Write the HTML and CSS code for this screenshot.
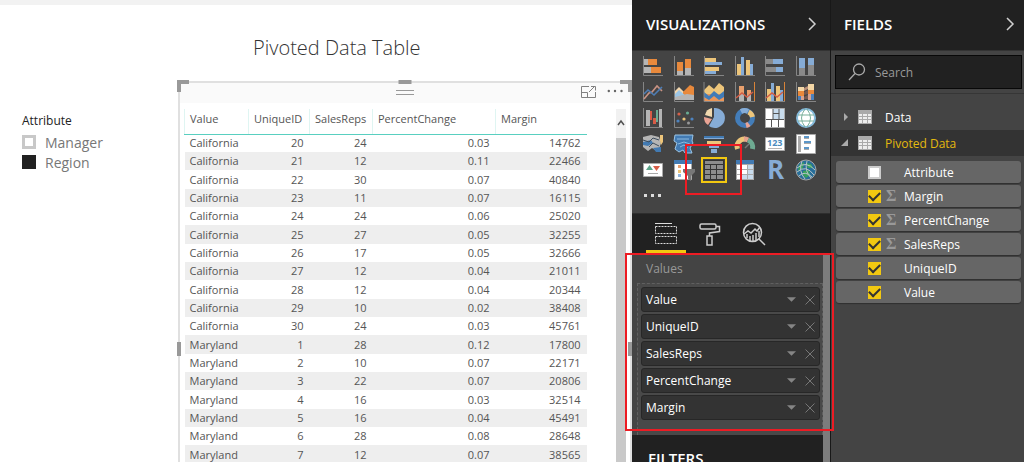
FILE: index.html
```html
<!DOCTYPE html>
<html lang="en">
<head>
<meta charset="utf-8">
<meta name="viewport" content="width=device-width, initial-scale=1">
<title>Pivoted Data Table</title>
<link rel="stylesheet" href="styles.css">
</head>
<body>
<div class="app">
  <main class="canvas">
    <h1 class="title">Pivoted Data Table</h1>
    <fieldset class="slicer">
      <legend>Attribute</legend>
      <label><input type="checkbox">Manager</label>
      <label><input type="checkbox" checked>Region</label>
    </fieldset>
    <section class="visual" aria-label="Table visual">
      <span class="handle corner-left"></span><span class="handle top"></span><span class="handle corner-right"></span>
      <span class="handle left"></span><span class="handle right"></span>
      <div class="visual-bar">
        <span class="grip"></span>
        <div class="visual-actions">
          <button type="button" aria-label="Focus mode"><svg width="17" height="14" viewBox="0 0 17 14" fill="none" stroke="#808080"><path d="M9 1.500H1.500V12.500H15.500V7M1.500 7.500H7.500V12.500M9 7L15 1M11 1.500H15.500V5.500"/></svg></button>
          <button type="button" aria-label="More options"><svg width="17" height="14" viewBox="0 0 17 14" fill="#666"><circle cx="1.800" cy="6" r="1.200"/><circle cx="8" cy="6" r="1.200"/><circle cx="14.500" cy="6" r="1.200"/></svg></button>
        </div>
      </div>
      <div class="visual-body">
        <table class="data">
          <colgroup><col class="c-value"><col class="c-id"><col class="c-reps"><col class="c-change"><col class="c-margin"></colgroup>
          <thead><tr><th>Value</th><th>UniqueID</th><th>SalesReps</th><th>PercentChange</th><th>Margin</th></tr></thead>
          <tbody>
            <tr><td>California</td><td>20</td><td>24</td><td>0.03</td><td>14762</td></tr>
            <tr><td>California</td><td>21</td><td>12</td><td>0.11</td><td>22466</td></tr>
            <tr><td>California</td><td>22</td><td>30</td><td>0.07</td><td>40840</td></tr>
            <tr><td>California</td><td>23</td><td>11</td><td>0.07</td><td>16115</td></tr>
            <tr><td>California</td><td>24</td><td>24</td><td>0.06</td><td>25020</td></tr>
            <tr><td>California</td><td>25</td><td>27</td><td>0.05</td><td>32255</td></tr>
            <tr><td>California</td><td>26</td><td>17</td><td>0.05</td><td>32666</td></tr>
            <tr><td>California</td><td>27</td><td>12</td><td>0.04</td><td>21011</td></tr>
            <tr><td>California</td><td>28</td><td>12</td><td>0.04</td><td>20344</td></tr>
            <tr><td>California</td><td>29</td><td>10</td><td>0.02</td><td>38408</td></tr>
            <tr><td>California</td><td>30</td><td>24</td><td>0.03</td><td>45761</td></tr>
            <tr><td>Maryland</td><td>1</td><td>28</td><td>0.12</td><td>17800</td></tr>
            <tr><td>Maryland</td><td>2</td><td>10</td><td>0.07</td><td>22171</td></tr>
            <tr><td>Maryland</td><td>3</td><td>22</td><td>0.07</td><td>20806</td></tr>
            <tr><td>Maryland</td><td>4</td><td>16</td><td>0.03</td><td>32514</td></tr>
            <tr><td>Maryland</td><td>5</td><td>16</td><td>0.04</td><td>45491</td></tr>
            <tr><td>Maryland</td><td>6</td><td>28</td><td>0.08</td><td>28648</td></tr>
            <tr><td>Maryland</td><td>7</td><td>12</td><td>0.07</td><td>38565</td></tr>
          </tbody>
        </table>
        <div class="table-scroll" aria-hidden="true">
          <svg width="10" height="29" viewBox="0 0 10 29" fill="none" stroke="#505050" stroke-width="1.500"><path d="M2 16L5 12L8 16"/></svg>
          <span></span>
        </div>
      </div>
    </section>
  </main>

  <aside class="viz">
    <header class="pane-head"><h2>VISUALIZATIONS</h2><button type="button" aria-label="Collapse visualizations"><svg width="10" height="16" viewBox="0 0 10 16" fill="none" stroke="#d0d0d0" stroke-width="1.500"><path d="M2 2L8 8L2 14"/></svg></button></header>
    <div class="gallery">
      <div class="icons">
        <button type="button" aria-label="Stacked bar chart"><svg viewBox="0 0 20 20"><path class="ax" d="M.5 0V19.500H20"/><path fill="#b5b5b5" d="M1 3h4v6H1zM1 11h7v6H1z"/><path fill="#e8893c" d="M5 3h9v6H5zM8 11h10v6H8z"/></svg></button>
        <button type="button" aria-label="Stacked column chart"><svg viewBox="0 0 20 20"><path class="ax" d="M.5 0V19.500H20"/><path fill="#b5b5b5" d="M3 15h6v4H3zM11 12h6v7h-6z"/><path fill="#e8893c" d="M3 6h6v9H3zM11 3h6v9h-6z"/></svg></button>
        <button type="button" aria-label="Clustered bar chart"><svg viewBox="0 0 20 20"><path class="ax" d="M.5 0V19.500H20"/><path fill="#edc57a" d="M1 2h11v4H1zM1 11h14v4H1z"/><path fill="#86acd6" d="M1 6h17v3H1zM1 15h11v3H1z"/></svg></button>
        <button type="button" aria-label="Clustered column chart"><svg viewBox="0 0 20 20"><path class="ax" d="M.5 0V19.500H20"/><path fill="#edc57a" d="M2 8h4v11H2zM11 4h4v15h-4z"/><path fill="#86acd6" d="M6 1h3v18H6zM15 8h3v11h-3z"/></svg></button>
        <button type="button" aria-label="100% stacked bar chart"><svg viewBox="0 0 20 20"><path class="ax" d="M.5 0V19.500H20"/><path fill="#8a8a8a" d="M1 3h7v5H1zM1 11h10v5H1z"/><path fill="#86acd6" d="M8 3h10v5H8zM11 11h7v5h-7z"/></svg></button>
        <button type="button" aria-label="100% stacked column chart"><svg viewBox="0 0 20 20"><path class="ax" d="M.5 0V19.500H20"/><path fill="#8a8a8a" d="M3 12h6v7H3zM12 9h6v10h-6z"/><path fill="#86acd6" d="M3 2h6v10H3zM12 2h6v7h-6z"/></svg></button>

        <button type="button" aria-label="Line chart"><svg viewBox="0 0 20 20"><path class="ax" d="M.5 0V19.500H20"/><g fill="none" stroke-width="1.600"><path stroke="#c99384" d="M1 17L6 11L9 10L14 4L19 9"/><path stroke="#4e7db4" d="M1 12L5 8L11 13L19 5"/></g></svg></button>
        <button type="button" aria-label="Area chart"><svg viewBox="0 0 20 20"><path class="ax" d="M.5 0V19.500H20"/><path fill="#f3d7ae" d="M1 9L5 5L12 12V18H1z"/><path fill="#e8893c" d="M9 10L16 3L20 5V18H9z"/><path fill="#9cc5e5" d="M1 12L5 8L13 15V18H1z"/><path fill="#b5b5b5" d="M1 15L13 12L20 13V18H1z"/></svg></button>
        <button type="button" aria-label="Stacked area chart"><svg viewBox="0 0 20 20"><path fill="#edc57a" d="M0 8L5 3L10 7L15 1L20 5V16H0z"/><path fill="#ec9658" d="M0 12H20V19H0z"/><path fill="#417bb7" d="M0 10L5 14L10 9L15 13L20 9V15L15 18L10 14L5 18L0 15z"/><path class="ax" d="M0 0V19.500H20"/></svg></button>
        <button type="button" aria-label="Line and stacked column chart"><svg viewBox="0 0 20 20"><path class="ax" d="M.5 0V19.500H20"/><path fill="#b5b5b5" d="M4 11h5v8H4zM12 12h4v7h-4z"/><path fill="#e9a06d" d="M4 4h5v8H4zM12 8h4v5h-4z"/><path fill="none" stroke="#d35d45" stroke-width="1.500" d="M1 16L7 11L12 15L18 10"/><path fill="#d88338" d="M19 0h1v19h-1z"/></svg></button>
        <button type="button" aria-label="Line and clustered column chart"><svg viewBox="0 0 20 20"><path class="ax" d="M.5 0V19.500H20"/><path fill="#edc57a" d="M2 7h4v12H2zM11 4h4v15h-4z"/><path fill="#86acd6" d="M6 1h3v18H6zM15 8h3v11h-3z"/><path fill="none" stroke="#d35d45" stroke-width="1.500" d="M1 16L7 11L12 15L18 10"/><path fill="#d88338" d="M19 0h1v19h-1z"/></svg></button>
        <button type="button" aria-label="Ribbon chart"><svg viewBox="0 0 20 20"><path class="ax" d="M.5 0V19.500H20"/><path fill="#b98f78" d="M8 6L12 4V7L8 9z"/><path fill="#74584f" d="M8 10L12 8V12L8 13zM8 15L12 13V17H8z"/><path fill="#f4d7a6" d="M2 5h6v4H2zM12 2h6v6h-6z"/><path fill="#e8893c" d="M2 9h6v5H2zM12 8h6v4h-6z"/><path fill="#4c80bb" d="M2 14h3v4H2zM15 12h3v6h-3z"/><path fill="#d8a28e" d="M5 14h3v4H5zM12 12h3v6h-3z"/></svg></button>

        <button type="button" aria-label="Waterfall chart"><svg viewBox="0 0 20 20"><path class="ax" d="M.5 0V19.500H20"/><path fill="#b5b5b5" d="M3 2h4v16H3zM16 1h3v18h-3z"/><path fill="#d75b45" d="M7 3h2v9H7zM10 10h3v6h-3z"/><path fill="#69ab91" d="M13 2h2v12h-2z"/></svg></button>
        <button type="button" aria-label="Scatter chart"><svg viewBox="0 0 20 20"><path class="ax" d="M.5 0V19.500H20"/><circle cx="5" cy="6" r="1.600" fill="#d65f48"/><circle cx="13.500" cy="5" r="1.600" fill="#69ab91"/><circle cx="4" cy="13" r="1.600" fill="#4d83bf"/><circle cx="10" cy="11" r="1.600" fill="#edc57a"/><circle cx="18" cy="11" r="1.600" fill="#4d83bf"/><circle cx="14.500" cy="15" r="1.500" fill="#999"/></svg></button>
        <button type="button" aria-label="Pie chart"><svg viewBox="0 0 20 20"><path fill="#86acd6" d="M10 0A10 10 0 1 1 5 18L10 9z"/><path fill="#f1d9af" d="M8 0A9 9 0 0 0 1 7L8 9z"/><path fill="#e9a394" d="M0 9L8 11L4 17A9 9 0 0 1 0 9z"/></svg></button>
        <button type="button" aria-label="Donut chart"><svg viewBox="0 0 20 20" fill="none" stroke-width="5"><circle cx="10" cy="10" r="7.500" stroke="#437db9"/><path stroke="#86acd6" d="M6 3.500A7.500 7.500 0 0 1 13 3.500"/><path stroke="#edc57a" d="M13.500 4A7.500 7.500 0 0 1 17.500 9"/><path stroke="#e9a394" d="M14 16A7.500 7.500 0 0 1 11 17.500"/></svg></button>
        <button type="button" aria-label="Treemap"><svg viewBox="0 0 20 20"><path fill="#fff" stroke="#aaa" d="M.5.500h19v19H.5z"/><path fill="#c8dced" d="M8 1h11v10H8z"/><path stroke="#555" fill="none" d="M1 11.500H19M8 1V11M8 5.500H14V1M14 5V11M6.500 12V19M13.500 12V19"/></svg></button>
        <button type="button" aria-label="Map"><svg viewBox="0 0 20 20"><circle cx="10" cy="10" r="9" fill="#fff" stroke="#86bbdc" stroke-width="2"/><path fill="none" stroke="#79af9a" d="M2 7H18M2 13H18M9 1Q2 10 9 19M11 1Q18 10 11 19"/></svg></button>

        <button type="button" aria-label="Filled map"><svg viewBox="0 0 20 20"><path fill="#b5b5b5" d="M0 3L8 1L16 3L18 9L15 18L9 14L5 17L0 13z"/><path fill="#427ab2" d="M0 8L8 6L10 9L5 12L0 11zM10 14L18 13L18 18H13z"/><path stroke="#3d4d5d" fill="none" d="M0 6L6 8L10 4L16 6M6 13L10 9L16 12"/><path fill="#edc57a" d="M17 1h3v7l-2 3-1-4z"/></svg></button>
        <button type="button" aria-label="Shape map"><svg viewBox="0 0 20 20"><path fill="#427ab2" stroke="#9cc5e5" d="M1 1L9 1L19 1L18 7L19 9L16 14L18 19L11 19L9 16L5 18L1 15L3 9L0 7z"/><path stroke="#8cb9df" fill="none" d="M3 5H15M4 10L10 8L16 10M6 13L10 11L14 14"/></svg></button>
        <button type="button" aria-label="Funnel"><svg viewBox="0 0 20 20"><path fill="#427ab2" d="M0 2h20v2H0z"/><path fill="#86acd6" d="M0 4h20v1H0zM5 11h10v3H5zM7 15h6v4H7z"/><path fill="#edc57a" d="M3 7h14v3H3z"/></svg></button>
        <button type="button" aria-label="Gauge"><svg viewBox="0 0 20 20" fill="none" stroke-width="5"><path stroke="#edc57a" d="M2.500 15A7.500 7.500 0 0 1 10 5"/><path stroke="#e5a18e" d="M9 5A8 8 0 0 1 13 6"/><path stroke="#6eaa92" d="M13 6A8 8 0 0 1 17.500 15"/><path stroke="#777" stroke-width="1.500" d="M10 14L14 10"/></svg></button>
        <button type="button" aria-label="Card"><svg viewBox="0 0 20 20"><path fill="#fff" stroke="#aaa" d="M.5 3.500h19v13H.5z"/><text x="2" y="12" font-size="9" font-weight="700" fill="#4b8bbd">123</text><path fill="#b5b5b5" d="M3 14h14v1H3z"/></svg></button>
        <button type="button" aria-label="Multi-row card"><svg viewBox="0 0 20 20"><path fill="#fff" stroke="#aaa" d="M.5.500h19v19H.5z"/><path fill="#aaa" d="M2 2h3v16H2zM8 4h5v1H8zM8 9h7v1H8zM8 15h5v1H8z"/><path fill="#5c97c9" d="M8 2h5v2H8zM8 7h7v2H8zM8 13h5v2H8z"/></svg></button>

        <button type="button" aria-label="KPI"><svg viewBox="0 0 20 20"><path fill="#fff" stroke="#aaa" d="M.5 3.500h19v13H.5z"/><path fill="#5ca58a" d="M3 10L6.500 5L10 10z"/><path fill="#d65f48" d="M10 6h7l-3.500 5z"/><path fill="#aaa" d="M5 13h10v1H5z"/></svg></button>
        <button type="button" aria-label="Slicer"><svg viewBox="0 0 20 20"><path fill="#fff" stroke="#aaa" d="M.5.500h17v19H.5z"/><path fill="#427ab2" d="M0 0h18v4H0z"/><path fill="#e9a06d" d="M4 5h3v3H4z"/><path fill="#edc57a" d="M4 10h3v3H4z"/><path fill="#8fb4dd" d="M4 14h3v3H4z"/><path fill="#777" d="M9 9h12v3l-4 4v5l-3-2v-3l-5-4z"/></svg></button>
        <button type="button" aria-label="Table" aria-pressed="true" class="selected"><svg viewBox="0 0 20 20"><path fill="#333" d="M0 0h20v20H0z"/><path fill="#8c8c8c" d="M1 1h18v3H1zM1 5h5v4H1zM7 5h5v4H7zM13 5h6v4h-6zM1 10h5v4H1zM7 10h5v4H7zM13 10h6v4h-6zM1 15h5v4H1zM7 15h5v4H7zM13 15h6v4h-6z"/></svg></button>
        <button type="button" aria-label="Matrix"><svg viewBox="0 0 20 20"><path fill="#aaa" d="M1 1h18v19H1z"/><path fill="#427ab2" d="M1 0h18v4H1z"/><path fill="#fff" d="M2 5h4v4H2zM2 10h4v4H2zM2 15h4v4H2zM7 5h5v4H7zM7 10h5v4H7z"/><path fill="#c8dced" d="M13 5h5v4h-5zM13 10h5v4h-5zM7 15h5v4H7zM13 15h5v4h-5z"/></svg></button>
        <button type="button" aria-label="R script visual"><svg viewBox="0 0 20 20"><text x="2" y="19" font-size="26" font-weight="700" fill="#86acd6">R</text></svg></button>
        <button type="button" aria-label="ArcGIS map"><svg viewBox="0 0 20 20"><circle cx="10" cy="10" r="10" fill="#276e99" stroke="#a5a5a5"/><path fill="#37a05b" d="M3 5L8 2L7 8L2 11zM10 3L15 4L17 8L12 8zM7 11L13 10L14 15L10 18L7 15z"/><path fill="none" stroke="#b8c4c9" d="M1 8Q10 0 19 10M1 12Q10 4 18 15M3 16Q9 10 16 17M6 1Q2 11 9 19M11 1Q8 11 15 18"/></svg></button>
      </div>
      <button type="button" class="more" aria-label="More visuals"><i></i><i></i><i></i></button>
      <span class="mark mark-icon"></span>
    </div>
    <nav class="tabs" aria-label="Visual settings">
      <button type="button" class="active" aria-label="Fields"><svg viewBox="0 0 24 24" fill="none" stroke="#ddd"><path d="M1 1.500H18"/><path stroke-dasharray="2 1" d="M1.500 4.500H22.500V11.500H1.500zM1.500 14.500H22.500V21.500H1.500z"/></svg></button>
      <button type="button" aria-label="Format"><svg viewBox="0 0 24 24" fill="none" stroke="#ccc" stroke-width="1.500"><rect x="2" y="2" width="16" height="5" rx="1.500"/><path d="M18 4.500H21.500V9.500L11.500 11V14M9 14H14V23H9z"/></svg></button>
      <button type="button" aria-label="Analytics"><svg viewBox="0 0 24 24" fill="none" stroke="#ccc" stroke-width="1.500"><circle cx="10.500" cy="10.500" r="9"/><path d="M17 17L23 23M2 12L6 9L9 11L13 7L15 9L18 5M5 12V16M8 14V19M11 13V19M14 11V18M17 9V15"/></svg></button>
    </nav>
    <div class="wells">
      <div class="wells-content">
        <h3>Values</h3>
        <ul class="chips">
          <li><span>Value</span><button type="button" aria-label="Value options"><svg class="down" viewBox="0 0 8 5"><path d="M0 0H8L4 4z"/></svg></button><button type="button" aria-label="Remove Value"><svg class="cross" viewBox="0 0 10 10"><path d="M.5.500L9.500 9.500M9.500.500L.5 9.500"/></svg></button></li>
          <li><span>UniqueID</span><button type="button" aria-label="UniqueID options"><svg class="down" viewBox="0 0 8 5"><path d="M0 0H8L4 4z"/></svg></button><button type="button" aria-label="Remove UniqueID"><svg class="cross" viewBox="0 0 10 10"><path d="M.5.500L9.500 9.500M9.500.500L.5 9.500"/></svg></button></li>
          <li><span>SalesReps</span><button type="button" aria-label="SalesReps options"><svg class="down" viewBox="0 0 8 5"><path d="M0 0H8L4 4z"/></svg></button><button type="button" aria-label="Remove SalesReps"><svg class="cross" viewBox="0 0 10 10"><path d="M.5.500L9.500 9.500M9.500.500L.5 9.500"/></svg></button></li>
          <li><span>PercentChange</span><button type="button" aria-label="PercentChange options"><svg class="down" viewBox="0 0 8 5"><path d="M0 0H8L4 4z"/></svg></button><button type="button" aria-label="Remove PercentChange"><svg class="cross" viewBox="0 0 10 10"><path d="M.5.500L9.500 9.500M9.500.500L.5 9.500"/></svg></button></li>
          <li><span>Margin</span><button type="button" aria-label="Margin options"><svg class="down" viewBox="0 0 8 5"><path d="M0 0H8L4 4z"/></svg></button><button type="button" aria-label="Remove Margin"><svg class="cross" viewBox="0 0 10 10"><path d="M.5.500L9.500 9.500M9.500.500L.5 9.500"/></svg></button></li>
        </ul>
        <h2 class="filters">FILTERS</h2>
      </div>
      <span class="mark mark-values"></span>
    </div>
  </aside>

  <aside class="fields">
    <header class="pane-head"><h2>FIELDS</h2><button type="button" aria-label="Collapse fields"><svg width="10" height="16" viewBox="0 0 10 16" fill="none" stroke="#d0d0d0" stroke-width="1.500"><path d="M2 2L8 8L2 14"/></svg></button></header>
    <div class="search-area">
      <label class="search"><svg width="18" height="18" viewBox="0 0 18 18" fill="none" stroke="#aaa" stroke-width="1.300"><circle cx="11" cy="6.500" r="5.500"/><path d="M7 10.500L1 17"/></svg><input type="search" placeholder="Search" aria-label="Search"></label>
    </div>
    <div class="tree">
      <button type="button" class="node" aria-expanded="false"><svg width="8" height="10" viewBox="0 0 8 10"><path fill="#aaa" d="M3 1L7 5L3 9z"/></svg><svg width="14" height="14" viewBox="0 0 14 14"><path fill="#aaa" d="M0 0h14v14H0z"/><path fill="#eee" d="M1 4h3v2H1zM5 4h4v2H5zM10 4h3v2h-3zM1 7h3v2H1zM5 7h4v2H5zM10 7h3v2h-3zM1 10h3v3H1zM5 10h4v3H5zM10 10h3v3h-3z"/></svg>Data</button>
      <button type="button" class="node open" aria-expanded="true"><svg width="8" height="10" viewBox="0 0 8 10"><path fill="#aaa" d="M7 1V8H0z"/></svg><svg width="14" height="14" viewBox="0 0 14 14"><path fill="#aaa" d="M0 0h14v14H0z"/><path fill="#eee" d="M1 4h3v2H1zM5 4h4v2H5zM10 4h3v2h-3zM1 7h3v2H1zM5 7h4v2H5zM10 7h3v2h-3zM1 10h3v3H1zM5 10h4v3H5zM10 10h3v3h-3z"/></svg>Pivoted Data</button>
      <div class="field-list">
        <label><input type="checkbox"><span class="sigma"></span>Attribute</label>
        <label><input type="checkbox" checked><span class="sigma">Σ</span>Margin</label>
        <label><input type="checkbox" checked><span class="sigma">Σ</span>PercentChange</label>
        <label><input type="checkbox" checked><span class="sigma">Σ</span>SalesReps</label>
        <label><input type="checkbox" checked><span class="sigma"></span>UniqueID</label>
        <label><input type="checkbox" checked><span class="sigma"></span>Value</label>
      </div>
    </div>
  </aside>
</div>
</body>
</html>
```
FILE: styles.css
```css
* { box-sizing: border-box; }
body { margin: 0; font-family: "Open Sans", "Noto Sans", sans-serif; font-size: 12px; background: #fff; }
h1, h2, h3, ul, fieldset { margin: 0; padding: 0; border: 0; font-weight: 400; }
button { padding: 0; border: 0; background: none; color: inherit; font: inherit; }
svg { display: block; }
.app { display: flex; height: 100vh; overflow: hidden; }

/* Report canvas */
.canvas { flex: 1; min-width: 0; display: grid; grid-template-columns: 178px 1fr; grid-template-rows: 76px 1fr; border-top: 5px solid #f2f2f2; color: #444; }
.title { grid-column: 1 / 3; padding: 28px 0 0 253px; font-size: 20px; font-weight: 300; line-height: 30px; white-space: nowrap; color: #333; }
.slicer { padding: 31px 0 0 22px; min-width: 0; }
.slicer legend { float: left; width: 100%; padding: 0; margin-bottom: 2px; line-height: 18px; color: #222; }
.slicer label { display: flex; clear: both; align-items: center; gap: 9px; height: 20px; font-size: 14px; color: #777; }
.slicer input { appearance: none; width: 14px; height: 14px; margin: 0; border: 3px solid #c8c8c8; background: #fff; }
.slicer input:checked { border-color: #212121; background: #212121; }

.visual { position: relative; min-width: 0; border: 2px solid #e0e0e0; border-bottom: 0; }
.handle { position: absolute; background: #999; }
.handle.top { top: -3px; left: 50%; width: 13px; height: 4px; transform: translateX(-50%); }
.handle.left { top: 259px; left: -3px; width: 4px; height: 14px; }
.handle.right { top: 259px; right: -2px; width: 4px; height: 14px; }
.handle.corner-left { top: -3px; left: -3px; width: 12px; height: 12px; border: solid #999; border-width: 4px 0 0 4px; background: none; }
.handle.corner-right { top: -3px; right: -2px; width: 12px; height: 12px; border: solid #999; border-width: 4px 4px 0 0; background: none; }
.visual-bar { display: grid; grid-template-columns: 1fr auto 1fr; height: 20px; background: #fafafa; }
.grip { grid-column: 2; width: 18px; height: 5px; margin-top: 7px; border: solid #999; border-width: 1px 0; }
.visual-actions { display: flex; align-items: flex-start; justify-content: flex-end; gap: 10px; padding: 2px 6px 0 0; }
.visual-body { display: flex; justify-content: space-between; padding: 6px 4px 0; }
.data { border-collapse: collapse; table-layout: fixed; width: 402px; font-size: 11px; color: #555; }
.c-value { width: 64px; } .c-id { width: 61px; } .c-reps { width: 63px; } .c-change { width: 123px; } .c-margin { width: 91px; }
.data th { height: 25px; padding: 0 0 5px 5px; border-left: 1px solid #dff5f2; border-bottom: 1px solid #59cfc0; text-align: left; font-weight: 400; white-space: nowrap; }
.data td { height: 18px; padding: 0 6px 0 5px; line-height: 16px; text-align: right; }
.data tr:nth-child(3n) td { height: 19px; }
.data td:first-child { text-align: left; }
.data tbody tr:nth-child(even) { background: #eee; }
.table-scroll { display: flex; flex-direction: column; width: 10px; background: #f1f1f1; }
.table-scroll span { flex: 1; background: #c9c9c9; }

/* Side panes */
.viz, .fields { display: flex; flex-direction: column; background: #444; color: #fff; }
.viz { position: relative; z-index: 1; width: 199px; border-right: 1px solid #181818; }
.fields { width: 193px; }
.pane-head { display: flex; align-items: center; justify-content: space-between; height: 51px; padding: 0 13px 2px 14px; background: #212121; border-bottom: 1px solid #333; }
.fields .pane-head { padding: 0 9px 2px 13px; }
h2 { font-size: 15px; font-weight: 600; line-height: 18px; }
.gallery { position: relative; height: 162px; padding: 5px 14px 0 11px; }
.icons { display: grid; grid-template-columns: repeat(6, 20px); justify-content: space-between; row-gap: 6px; }
.icons button, .icons svg { width: 20px; height: 20px; }
.icons svg { overflow: visible; }
.icons .ax { fill: none; stroke: #858585; }
.icons .selected { outline: 2px solid #f2c811; outline-offset: 1px; }
.more { display: flex; gap: 4px; padding: 14px 0 0 1px; }
.more i { width: 3px; height: 3px; background: #ddd; }
.mark { position: absolute; border: 2px solid #ed1c24; pointer-events: none; }
.mark-icon { left: 53px; top: 93px; width: 57px; height: 51px; }
.tabs { display: flex; gap: 4px; height: 40px; padding-left: 14px; background: #212121; border-top: 1px solid #2d2d2d; }
.tabs button { width: 40px; padding: 4px 8px 0; border-bottom: 3px solid transparent; }
.tabs .active { border-color: #f2c811; }
.tabs svg { width: 24px; height: 24px; }
.wells { position: relative; flex: 1; min-height: 0; border-right: 7px solid #7c7c7c; }
.mark-values { left: -7px; right: -11px; top: 0; height: 178px; }
.wells-content { height: 100%; overflow: hidden; }
h3 { padding: 8px 14px 6px; font-size: 12px; line-height: 16px; color: #999; }
.chips { display: flex; flex-direction: column; gap: 2px; margin: 0 0 0 5px; padding: 3px 2px 15px 3px; border: 1px dashed #606060; border-bottom: 0; background: #494949; list-style: none; }
.chips li { display: flex; align-items: center; height: 25px; padding: 0 4px; border: 1px solid #272727; border-radius: 3px; background: #333; }
.chips span { flex: 1; }
.chips button + button { margin-left: 9px; }
.down { width: 9px; height: 6px; fill: #858585; }
.cross { width: 10px; height: 10px; fill: none; stroke: #777; }
.filters { padding: 14px 16px; background: #212121; }

.search-area { padding: 4px 2px 4px 4px; border-bottom: 1px solid #363636; }
.search { display: flex; align-items: center; gap: 9px; height: 34px; padding: 0 12px; border: 1px solid #080808; background: #212121; }
.search input { flex: 1; min-width: 0; padding: 0; border: 0; outline: 0; background: none; color: #fff; font: inherit; }
.search input::placeholder { color: #999; opacity: 1; }
.tree { padding-top: 10px; }
.node { display: flex; align-items: center; width: 100%; height: 26px; padding-left: 10px; text-align: left; }
.node svg + svg { margin: 0 13px 0 9px; }
.node.open { background: #333; color: #e3b90f; }
.field-list { display: grid; gap: 2px; padding: 5px 3px 0 5px; }
.field-list label { display: flex; align-items: center; height: 22px; padding-left: 32px; border-radius: 3px; background: #666; box-shadow: 0 1px 1px #303030; }
.field-list input { appearance: none; width: 13px; height: 13px; margin: 0; border: 2px solid #ccc; background: #fff; }
.field-list input:checked { display: grid; place-items: center; border: 0; background: #f2c811; }
.field-list input:checked::after { content: ""; width: 9px; height: 5px; border: solid #333; border-width: 0 0 2px 2px; transform: rotate(-45deg) translate(1px, -1px); }
.sigma { width: 23px; padding-left: 5px; color: #999; font-family: "Liberation Serif", serif; font-size: 16px; font-weight: 700; line-height: 16px; }
```
